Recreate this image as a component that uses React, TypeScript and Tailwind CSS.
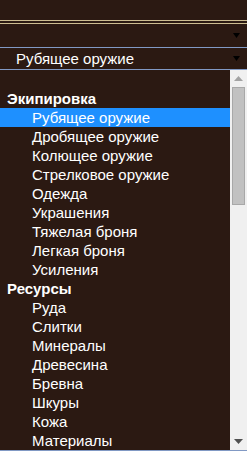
import React from 'react';

const groups = [
  {
    label: 'Экипировка',
    items: [
      'Рубящее оружие',
      'Дробящее оружие',
      'Колющее оружие',
      'Стрелковое оружие',
      'Одежда',
      'Украшения',
      'Тяжелая броня',
      'Легкая броня',
      'Усиления',
    ],
  },
  {
    label: 'Ресурсы',
    items: ['Руда', 'Слитки', 'Минералы', 'Древесина', 'Бревна', 'Шкуры', 'Кожа', 'Материалы'],
  },
];

function Caret() {
  return (
    <svg width="7" height="5" viewBox="0 0 7 5" className="shrink-0">
      <path d="M0 0h7L3.5 5z" fill="#000" />
    </svg>
  );
}

export default function App() {
  return (
    <div
      className="w-[247px] h-[451px] overflow-hidden bg-[#2b1912] text-white text-[15px] leading-[19px]"
      style={{ fontFamily: '"Liberation Sans", Arial, sans-serif' }}
    >
      {/* верхний блок */}
      <div className="h-[21px] border-b border-[#cdbd91]" />
      {/* первый селект (пустой) */}
      <div className="mt-[2px] h-[25px] border-t border-b border-t-[#cdbd91] border-b-[#8199c4] flex items-center justify-end pr-[7px]">
        <Caret />
      </div>
      {/* второй селект */}
      <div className="h-[22px] border-b border-[#8199c4] flex items-center justify-between pl-[16px] pr-[7px]">
        <span>Рубящее оружие</span>
        <Caret />
      </div>

      {/* список */}
      <div className="flex h-[381px] border-b border-[#8199c4]">
        <div className="flex-1 flex flex-col">
          <div className="h-[19px]" />
          {groups.map(g => (
            <React.Fragment key={g.label}>
              <div className="h-[19px] pl-[7px] font-bold">{g.label}</div>
              {g.items.map((it, i) => (
                <div
                  key={it}
                  className={
                    'h-[19px] pl-[32px] whitespace-nowrap ' +
                    (g.label === 'Экипировка' && i === 0 ? 'bg-[#1e90ff]' : '')
                  }
                >
                  {it}
                </div>
              ))}
            </React.Fragment>
          ))}
        </div>

        {/* полоса прокрутки */}
        <div className="w-[17px] bg-[#f0f0f0] flex flex-col">
          <div className="h-[17px] flex items-center justify-center">
            <svg width="9" height="5" viewBox="0 0 9 5">
              <path d="M4.5 0L9 5H0z" fill="#a3a3a3" />
            </svg>
          </div>
          <div className="mx-[2px] h-[118px] bg-[#c1c1c1] border border-[#a8a8a8]" />
          <div className="flex-1" />
          <div className="h-[17px] flex items-center justify-center">
            <svg width="9" height="5" viewBox="0 0 9 5">
              <path d="M0 0h9L4.5 5z" fill="#505050" />
            </svg>
          </div>
        </div>
      </div>
    </div>
  );
}
